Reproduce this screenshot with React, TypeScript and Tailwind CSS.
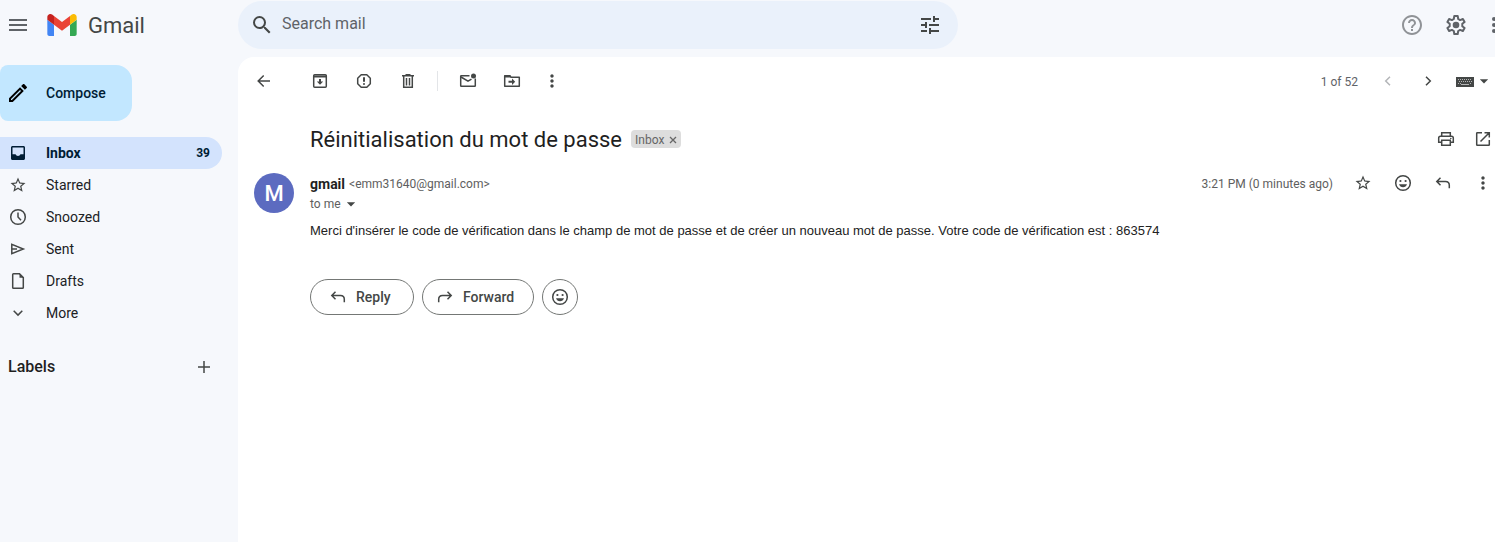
import type { ReactNode } from "react";
import {
  MdArrowDropDown,
  MdHelpOutline,
  MdMenu,
  MdMoreVert,
  MdOutlineEdit,
  MdSearch,
  MdStarBorder,
  MdTune,
} from "react-icons/md";

type IconProps = { children: ReactNode; className?: string };

/* 20-unit line icon */
function Icon({ children, className = "size-5" }: IconProps) {
  return (
    <svg
      viewBox="0 0 20 20"
      className={className}
      fill="none"
      stroke="currentColor"
      strokeWidth="1.5"
      aria-hidden="true"
    >
      {children}
    </svg>
  );
}

function GmailLogo() {
  return (
    <svg viewBox="52 42 88 66" className="h-[22px] w-[30px]" aria-hidden="true">
      <path fill="#4285f4" d="M58 108h14V74L52 59v43c0 3.32 2.69 6 6 6" />
      <path fill="#34a853" d="M120 108h14c3.32 0 6-2.69 6-6V59l-20 15" />
      <path fill="#fbbc04" d="M120 48v26l20-15v-8c0-7.42-8.47-11.65-14.4-7.2" />
      <path fill="#ea4335" d="M72 74V48l24 18 24-18v26L96 92" />
      <path fill="#c5221f" d="M52 51v8l20 15V48l-5.6-4.2c-5.94-4.45-14.4-.22-14.4 7.2" />
    </svg>
  );
}

function GearIcon() {
  return (
    <svg viewBox="0 0 24 24" className="size-6" fill="currentColor" aria-hidden="true">
      <path
        fill="none"
        stroke="currentColor"
        strokeWidth="2"
        strokeLinejoin="round"
        d="M10.300 3h3.400l.5 3 1.900 1.100 2.800-1.100 1.700 2.900-2.300 1.900v2.400l2.300 1.900-1.700 2.900-2.800-1.100-1.900 1.100-.5 3h-3.400l-.5-3-1.900-1.100-2.800 1.100-1.700-2.900 2.300-1.900v-2.400L3.400 8.900 5.100 6l2.800 1.100L9.800 6z"
      />
      <circle cx="12" cy="12" r="3.300" />
    </svg>
  );
}

function ReplyIcon() {
  return (
    <Icon>
      <path d="M7.5 4.8 3.8 8.5l3.7 3.7M4 8.5h8.5c2.2 0 3.8 1.6 3.8 3.8v3" />
    </Icon>
  );
}

function ForwardIcon() {
  return (
    <Icon>
      <path d="m12.5 4.8 3.7 3.7-3.7 3.7M16 8.5H7.5c-2.2 0-3.8 1.6-3.8 3.8v3" />
    </Icon>
  );
}

function SmileIcon() {
  return (
    <Icon>
      <circle cx="10" cy="10" r="7.3" />
      <circle cx="7.4" cy="8" r="1.1" fill="currentColor" stroke="none" />
      <circle cx="12.6" cy="8" r="1.1" fill="currentColor" stroke="none" />
      <path d="M6 11.3h8c-.6 1.8-2.1 3-4 3s-3.400-1.200-4-3z" fill="currentColor" stroke="none" />
    </Icon>
  );
}

function IconButton({
  label,
  children,
  className = "w-10",
}: {
  label: string;
  children: ReactNode;
  className?: string;
}) {
  return (
    <button
      type="button"
      aria-label={label}
      className={`flex h-10 shrink-0 items-center justify-center rounded-full ${className}`}
    >
      {children}
    </button>
  );
}

const folders: { name: string; count?: number; icon: ReactNode }[] = [
  {
    name: "Inbox",
    count: 39,
    icon: (
      <Icon>
        <path
          fill="currentColor"
          stroke="none"
          fillRule="evenodd"
          d="M4.500 3h11c.8 0 1.500.7 1.500 1.500v11c0 .8-.7 1.500-1.500 1.500h-11c-.8 0-1.500-.7-1.500-1.500v-11C3 3.700 3.700 3 4.500 3zm0 1.500v6.800h3.100c.4 1 1.300 1.700 2.400 1.700s2-.7 2.400-1.700h3.100V4.500z"
        />
      </Icon>
    ),
  },
  { name: "Starred", icon: <MdStarBorder className="size-[18px]" /> },
  {
    name: "Snoozed",
    icon: (
      <Icon>
        <circle cx="10" cy="10" r="7.3" />
        <path d="M10 5.500V10l3 3.200" />
      </Icon>
    ),
  },
  {
    name: "Sent",
    icon: (
      <Icon>
        <path d="M3.800 5.400v9.200L15.300 10zM4 10h5" />
      </Icon>
    ),
  },
  {
    name: "Drafts",
    icon: (
      <Icon>
        <path d="M11.500 2.800H5.500a.8.8 0 0 0-.8.8v12.800c0 .4.4.8.8.8h9c.4 0 .8-.4.8-.8V6.600z" />
        <path d="M11.500 2.500v4.300h4z" fill="currentColor" stroke="none" />
      </Icon>
    ),
  },
  {
    name: "More",
    icon: (
      <Icon>
        <path d="m5.700 7.800 4.300 4.300 4.300-4.300" />
      </Icon>
    ),
  },
];

function Header() {
  return (
    <header className="flex h-[57px] items-start overflow-hidden">
      <div className="flex h-[50px] w-[238px] shrink-0 items-center">
        <button type="button" aria-label="Main menu" className="ml-[6px] text-[#5f6368]">
          <MdMenu className="size-6" />
        </button>
        <a href="#inbox" className="ml-[17px] flex items-center gap-[11px] text-[22px] text-[#444746]">
          <GmailLogo />
          Gmail
        </a>
      </div>
      <form
        role="search"
        className="mt-px flex h-12 w-full max-w-[720px] items-center rounded-full bg-[#eaf1fb] pr-2 pl-1 text-[#444746]"
      >
        <IconButton label="Search">
          <MdSearch className="size-6" />
        </IconButton>
        <input
          type="text"
          aria-label="Search mail"
          placeholder="Search mail"
          className="h-10 min-w-0 flex-1 bg-transparent pb-1 text-base outline-none placeholder:text-[#5f6368]"
        />
        <IconButton label="Show search options">
          <MdTune className="size-6" />
        </IconButton>
      </form>
      <div className="-mr-[25px] ml-auto flex h-[50px] items-center gap-1 text-[#5f6368]">
        <span className="flex text-[#909397]">
          <IconButton label="Support">
            <MdHelpOutline className="size-6" />
          </IconButton>
        </span>
        <IconButton label="Settings">
          <GearIcon />
        </IconButton>
        <IconButton label="Google apps">
          <svg viewBox="0 0 24 24" className="size-6" fill="currentColor" aria-hidden="true">
            {[6, 12, 18].map((y) =>
              [6, 12, 18].map((x) => <circle key={`${x}-${y}`} cx={x} cy={y} r="2" />),
            )}
          </svg>
        </IconButton>
      </div>
    </header>
  );
}

function Sidebar() {
  return (
    <aside className="w-[238px] shrink-0 pt-2">
      <button
        type="button"
        className="flex h-14 w-[132px] items-center gap-4 rounded-r-2xl rounded-l-lg bg-[#c2e7ff] pl-[6px] text-sm font-medium text-[#001d35]"
      >
        <MdOutlineEdit className="size-6 text-black" />
        Compose
      </button>
      <nav aria-label="Mail folders" className="mt-4 mr-4">
        {folders.map((folder) => (
          <a
            key={folder.name}
            href={`#${folder.name.toLowerCase()}`}
            className={
              folder.count
                ? "flex h-8 items-center rounded-r-full bg-[#d3e3fd] pr-3 pl-2 text-sm font-bold text-[#001d35]"
                : "flex h-8 items-center rounded-r-full pr-3 pl-2 text-sm text-[#202124]"
            }
          >
            <span
              className={
                folder.count
                  ? "mr-[18px] flex w-5 justify-center"
                  : "mr-[18px] flex w-5 justify-center text-[#444746]"
              }
            >
              {folder.icon}
            </span>
            <span className="flex-1">{folder.name}</span>
            {folder.count && <span className="text-xs">{folder.count}</span>}
          </a>
        ))}
      </nav>
      <div className="mt-[18px] flex h-10 items-center justify-between pr-6 pl-2">
        <h2 className="text-base font-medium text-[#1f1f1f]">Labels</h2>
        <button type="button" aria-label="Create new label" className="text-[#444746]">
          <Icon>
            <path d="M10 4v12M4 10h12" />
          </Icon>
        </button>
      </div>
    </aside>
  );
}

function Toolbar() {
  return (
    <div className="flex h-12 items-center pl-[6px] text-[#444746]">
      <IconButton label="Back to inbox">
        <Icon>
          <path d="M9.700 4.500 4.200 10l5.500 5.500M4.500 10H16" />
        </Icon>
      </IconButton>
      <div className="ml-4 flex gap-1">
        <IconButton label="Archive">
          <Icon>
            <rect x="3.700" y="3.700" width="12.600" height="12.600" rx="1" />
            <path d="M3.500 5.500h13" strokeWidth="2" />
            <path d="M10 8v4.500" strokeWidth="2" />
            <path d="M6.800 10.600h6.400L10 13.800z" fill="currentColor" stroke="none" />
          </Icon>
        </IconButton>
        <IconButton label="Report spam">
          <Icon>
            <path d="M7.200 3.700h5.600l3.500 3.500v5.600l-3.500 3.500H7.200l-3.500-3.500V7.200z" strokeLinejoin="round" />
            <path d="M10 6.200v4.600M10 12.200v1.600" strokeWidth="2" />
          </Icon>
        </IconButton>
        <IconButton label="Delete">
          <Icon>
            <path d="M4 4.700h12M7.500 3.700h5M5.700 5v11.300h8.600V5M8.500 7v7.500M11.500 7v7.500" />
          </Icon>
        </IconButton>
      </div>
      <div className="mr-[10px] ml-[9px] h-5 w-px bg-[#e3e5e8]" />
      <div className="flex gap-1">
        <IconButton label="Mark as unread">
          <Icon>
            <path d="M11.500 4.700H3.300a.6.6 0 0 0-.6.6v9.400c0 .3.3.6.6.6h13.400c.3 0 .6-.3.6-.6V7.500" />
            <path d="m3 6 7 4.200 3.500-2.100" />
            <circle cx="15.500" cy="5" r="2.500" fill="currentColor" stroke="none" />
          </Icon>
        </IconButton>
        <IconButton label="Move to">
          <Icon>
            <path d="M2.700 15.300V4.700h5l1.500 1.600h8.100v9z" strokeLinejoin="round" />
            <path d="M2.700 5.600H9" strokeWidth="2" />
            <path d="M6.500 10.800h4" strokeWidth="2" />
            <path d="M10 7.600v6.400l3.200-3.200z" fill="currentColor" stroke="none" />
          </Icon>
        </IconButton>
      </div>
      <IconButton label="More options">
        <MdMoreVert className="size-5" />
      </IconButton>
      <div className="ml-auto flex items-center text-xs text-[#5f6368]">
        <span className="mr-[10px] pt-px">1 of 52</span>
        <span className="flex text-[#b4b6b9]">
          <IconButton label="Newer">
            <Icon>
              <path d="M12 5.700 7.700 10l4.300 4.300" />
            </Icon>
          </IconButton>
        </span>
        <span className="flex text-[#444746]">
          <IconButton label="Older">
            <Icon>
              <path d="m8 5.700 4.300 4.300L8 14.300" />
            </Icon>
          </IconButton>
        </span>
        <button type="button" aria-label="Input tools" className="ml-2 flex items-center pr-px text-[#444746]">
          <svg viewBox="0 0 18 12" className="mt-[2px] h-3 w-[18px]" aria-hidden="true">
            <path fill="currentColor" d="M0 1h18v10H0z" />
            <path
              stroke="#fff"
              strokeOpacity=".6"
              strokeDasharray="1 1"
              d="M2 3.500h14M3 5.500h13M2 7.500h3M14 7.500h2"
            />
            <path stroke="#fff" strokeOpacity=".6" d="M5 8.500h8" />
          </svg>
          <MdArrowDropDown className="size-5" />
        </button>
      </div>
    </div>
  );
}

function Message() {
  return (
    <article>
      <div className="mt-[14px] flex h-10 items-center pl-[72px] text-[#444746]">
        <h1 className="text-[22px] text-[#1f1f1f]">Réinitialisation du mot de passe</h1>
        <span className="ml-[9px] flex h-[18px] items-center gap-[5px] rounded bg-[#dddddd] px-1 pt-px text-xs text-[#666666]">
          Inbox
          <button type="button" aria-label="Remove label Inbox">
            <svg viewBox="0 0 8 8" className="size-2" stroke="currentColor" strokeWidth="1.300" aria-hidden="true">
              <path d="m1 1 6 6M7 1 1 7" />
            </svg>
          </button>
        </span>
        <div className="-mr-[7px] ml-auto flex">
          <IconButton label="Print all" className="w-9">
            <Icon>
              <path d="M5.700 13.300H2.700V9c0-1 .8-1.800 1.800-1.800h11c1 0 1.800.8 1.800 1.800v4.300h-3" />
              <path d="M5.700 7V3.700h8.600V7M5.700 11.300h8.600v5H5.700z" />
              <circle cx="14.800" cy="9.500" r=".8" fill="currentColor" stroke="none" />
            </Icon>
          </IconButton>
          <IconButton label="In new window" className="w-[38px]">
            <Icon>
              <path d="M9 3.700H4.300a.6.600 0 0 0-.6.600v11.400c0 .3.300.6.600.6h11.400c.3 0 .6-.3.600-.6V11M11.500 3.700h4.800v4.800M16 4l-8.500 8.500" />
            </Icon>
          </IconButton>
        </div>
      </div>
      <div className="mt-[14px] flex pl-4">
        <div className="flex size-10 shrink-0 items-center justify-center rounded-full bg-[#5c6bc0] text-[22px] font-medium text-white">
          M
        </div>
        <div className="ml-4 min-w-0 flex-1 pt-px">
          <div className="flex h-5 items-center gap-1 text-xs text-[#5e5e5e]">
            <span className="text-sm font-bold text-[#1f1f1f]">gmail</span>
            <span>&lt;emm31640@gmail.com&gt;</span>
          </div>
          <button type="button" className="flex h-5 items-center text-xs text-[#5e5e5e]">
            to me
            <MdArrowDropDown className="size-5 text-[#444746]" />
          </button>
          <p className="mt-2 font-['Liberation_Sans',Arial,sans-serif] text-[13px] leading-[18px] text-[#222222]">
            Merci d'insérer le code de vérification dans le champ de mot de passe et de créer un nouveau mot de
            passe. Votre code de vérification est : 863574
          </p>
          <div className="mt-[39px] flex gap-2 text-sm font-medium text-[#444746]">
            <button
              type="button"
              className="flex h-9 w-[104px] items-center gap-2 rounded-full border border-[#747775] pl-[17px]"
            >
              <ReplyIcon />
              Reply
            </button>
            <button
              type="button"
              className="flex h-9 w-28 items-center gap-2 rounded-full border border-[#747775] pl-3"
            >
              <ForwardIcon />
              Forward
            </button>
            <button
              type="button"
              aria-label="Add reaction"
              className="flex size-9 items-center justify-center rounded-full border border-[#747775]"
            >
              <SmileIcon />
            </button>
          </div>
        </div>
        <div className="-mt-[10px] -mr-2 flex h-10 items-center text-[#444746]">
          <time className="mr-[10px] pt-px text-xs text-[#5e5e5e]">3:21 PM (0 minutes ago)</time>
          <IconButton label="Star">
            <MdStarBorder className="size-[18px]" />
          </IconButton>
          <IconButton label="React">
            <SmileIcon />
          </IconButton>
          <IconButton label="Reply">
            <ReplyIcon />
          </IconButton>
          <IconButton label="More message options">
            <MdMoreVert className="size-5" />
          </IconButton>
        </div>
      </div>
    </article>
  );
}

export default function App() {
  return (
    <div className="flex min-h-screen flex-col overflow-hidden bg-[#f6f8fc] font-[Roboto,sans-serif]">
      <Header />
      <div className="flex flex-1">
        <Sidebar />
        <main className="min-w-0 flex-1 overflow-hidden rounded-tl-2xl bg-white">
          <Toolbar />
          <Message />
        </main>
      </div>
    </div>
  );
}
